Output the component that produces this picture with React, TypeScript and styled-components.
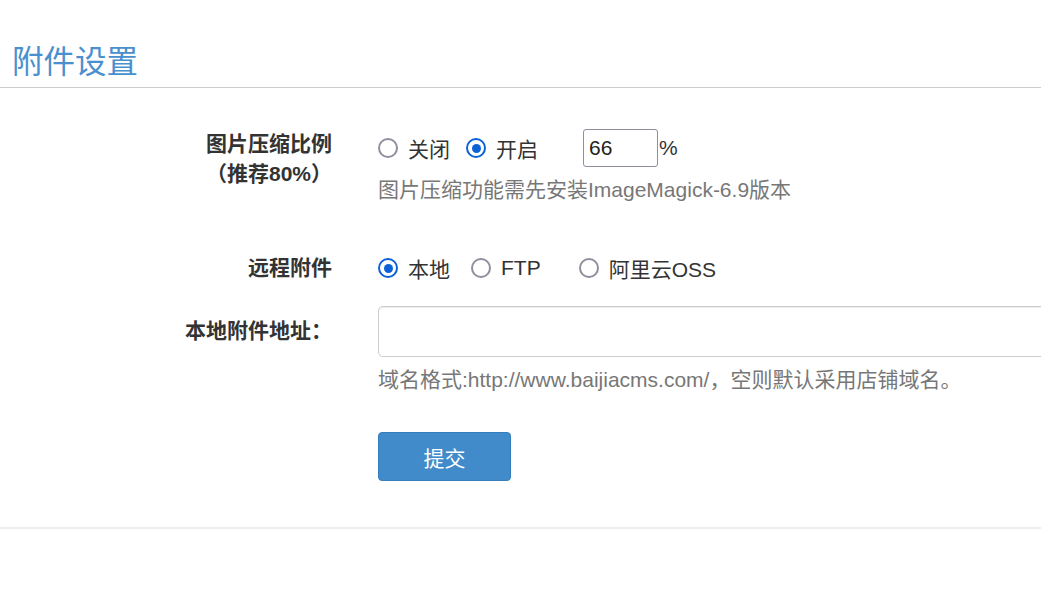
import React from "react";
import styled, { createGlobalStyle } from "styled-components";

const Global = createGlobalStyle`
  html, body { margin: 0; padding: 0; background: #fff; overflow: hidden; }
  body { font-family: "Liberation Sans", "Noto Sans CJK SC", sans-serif; color: #333; }
`;

const Page = styled.div`
  width: 1041px;
  height: 602px;
  overflow: hidden;
`;

const Header = styled.div`
  padding: 36px 12px 5px;
  border-bottom: 1px solid #cccccc;
`;

const Title = styled.h2`
  margin: 0;
  font-size: 31.5px;
  line-height: 46px;
  font-weight: 400;
  color: #4a8fce;
  font-family: "Noto Sans CJK SC", sans-serif;
`;

const Form = styled.form`
  display: grid;
  grid-template-columns: 332px 1fr;
  column-gap: 46px;
  padding-top: 41px;
  padding-bottom: 46px;
  border-bottom: 2px solid #eeeeee;
`;

const Label = styled.div<{ $mt?: number }>`
  grid-column: 1;
  text-align: right;
  font-weight: 700;
  font-size: 21px;
  line-height: 30px;
  color: #333;
  margin-top: ${(p) => p.$mt ?? 0}px;
  align-self: start;
`;

const Field = styled.div<{ $mt?: number }>`
  grid-column: 2;
  margin-top: ${(p) => p.$mt ?? 0}px;
  min-width: 0;
`;

const Line = styled.div<{ $h: number }>`
  display: flex;
  align-items: center;
  height: ${(p) => p.$h}px;
  font-size: 21px;
  white-space: nowrap;
`;

const Option = styled.label<{ $mr?: number }>`
  display: inline-flex;
  align-items: center;
  gap: 10px;
  margin-right: ${(p) => p.$mr ?? 0}px;
  color: #333;
  font-size: 21px;
`;

const Radio = styled.span<{ $on?: boolean }>`
  box-sizing: border-box;
  width: 20px;
  height: 20px;
  border-radius: 50%;
  border: 2.5px solid ${(p) => (p.$on ? "#0b62d6" : "#8f8f9d")};
  display: inline-flex;
  align-items: center;
  justify-content: center;
  &::after {
    content: "";
    display: ${(p) => (p.$on ? "block" : "none")};
    width: 9px;
    height: 9px;
    border-radius: 50%;
    background: #0b62d6;
  }
`;

const SmallInput = styled.div`
  box-sizing: border-box;
  width: 75px;
  height: 38px;
  border: 1px solid #8f8f9d;
  border-radius: 3px;
  padding-left: 5px;
  font-size: 21px;
  line-height: 36px;
  color: #222;
  margin-left: 45px;
  margin-right: 1px;
`;

const Hint = styled.div<{ $mt: number }>`
  margin-top: ${(p) => p.$mt}px;
  font-size: 21px;
  line-height: 30px;
  color: #777;
  white-space: nowrap;
`;

const WideInput = styled.div`
  box-sizing: border-box;
  width: 720px;
  height: 51px;
  border: 1px solid #cccccc;
  border-radius: 5px;
  box-shadow: inset 0 1px 1px rgba(0, 0, 0, 0.075);
`;

const Button = styled.button`
  box-sizing: border-box;
  width: 133px;
  height: 49px;
  background: #428bca;
  border: 1px solid #357ebd;
  border-radius: 4px;
  color: #fff;
  font-size: 21px;
  font-family: "Noto Sans CJK SC", sans-serif;
  margin-top: 37px;
  padding: 0;
`;

export default function App() {
  return (
    <Page>
      <Global />
      <Header>
        <Title>附件设置</Title>
      </Header>
      <Form onSubmit={(e) => e.preventDefault()}>
        <Label>
          图片压缩比例
          <br />
          （推荐80%）
        </Label>
        <Field>
          <Line $h={38}>
            <Option $mr={16}>
              <Radio />
              关闭
            </Option>
            <Option>
              <Radio $on />
              开启
            </Option>
            <SmallInput>66</SmallInput>%
          </Line>
          <Hint $mt={8}>图片压缩功能需先安装ImageMagick-6.9版本</Hint>
        </Field>

        <Label $mt={48}>远程附件</Label>
        <Field $mt={48}>
          <Line $h={30}>
            <Option $mr={21}>
              <Radio $on />
              本地
            </Option>
            <Option $mr={38}>
              <Radio />
              FTP
            </Option>
            <Option>
              <Radio />
              阿里云OSS
            </Option>
          </Line>
        </Field>

        <Label $mt={33}>本地附件地址：</Label>
        <Field $mt={23}>
          <WideInput />
          <Hint $mt={8}>域名格式:http://www.baijiacms.com/，空则默认采用店铺域名。</Hint>
          <Button type="submit">提交</Button>
        </Field>
      </Form>
    </Page>
  );
}
